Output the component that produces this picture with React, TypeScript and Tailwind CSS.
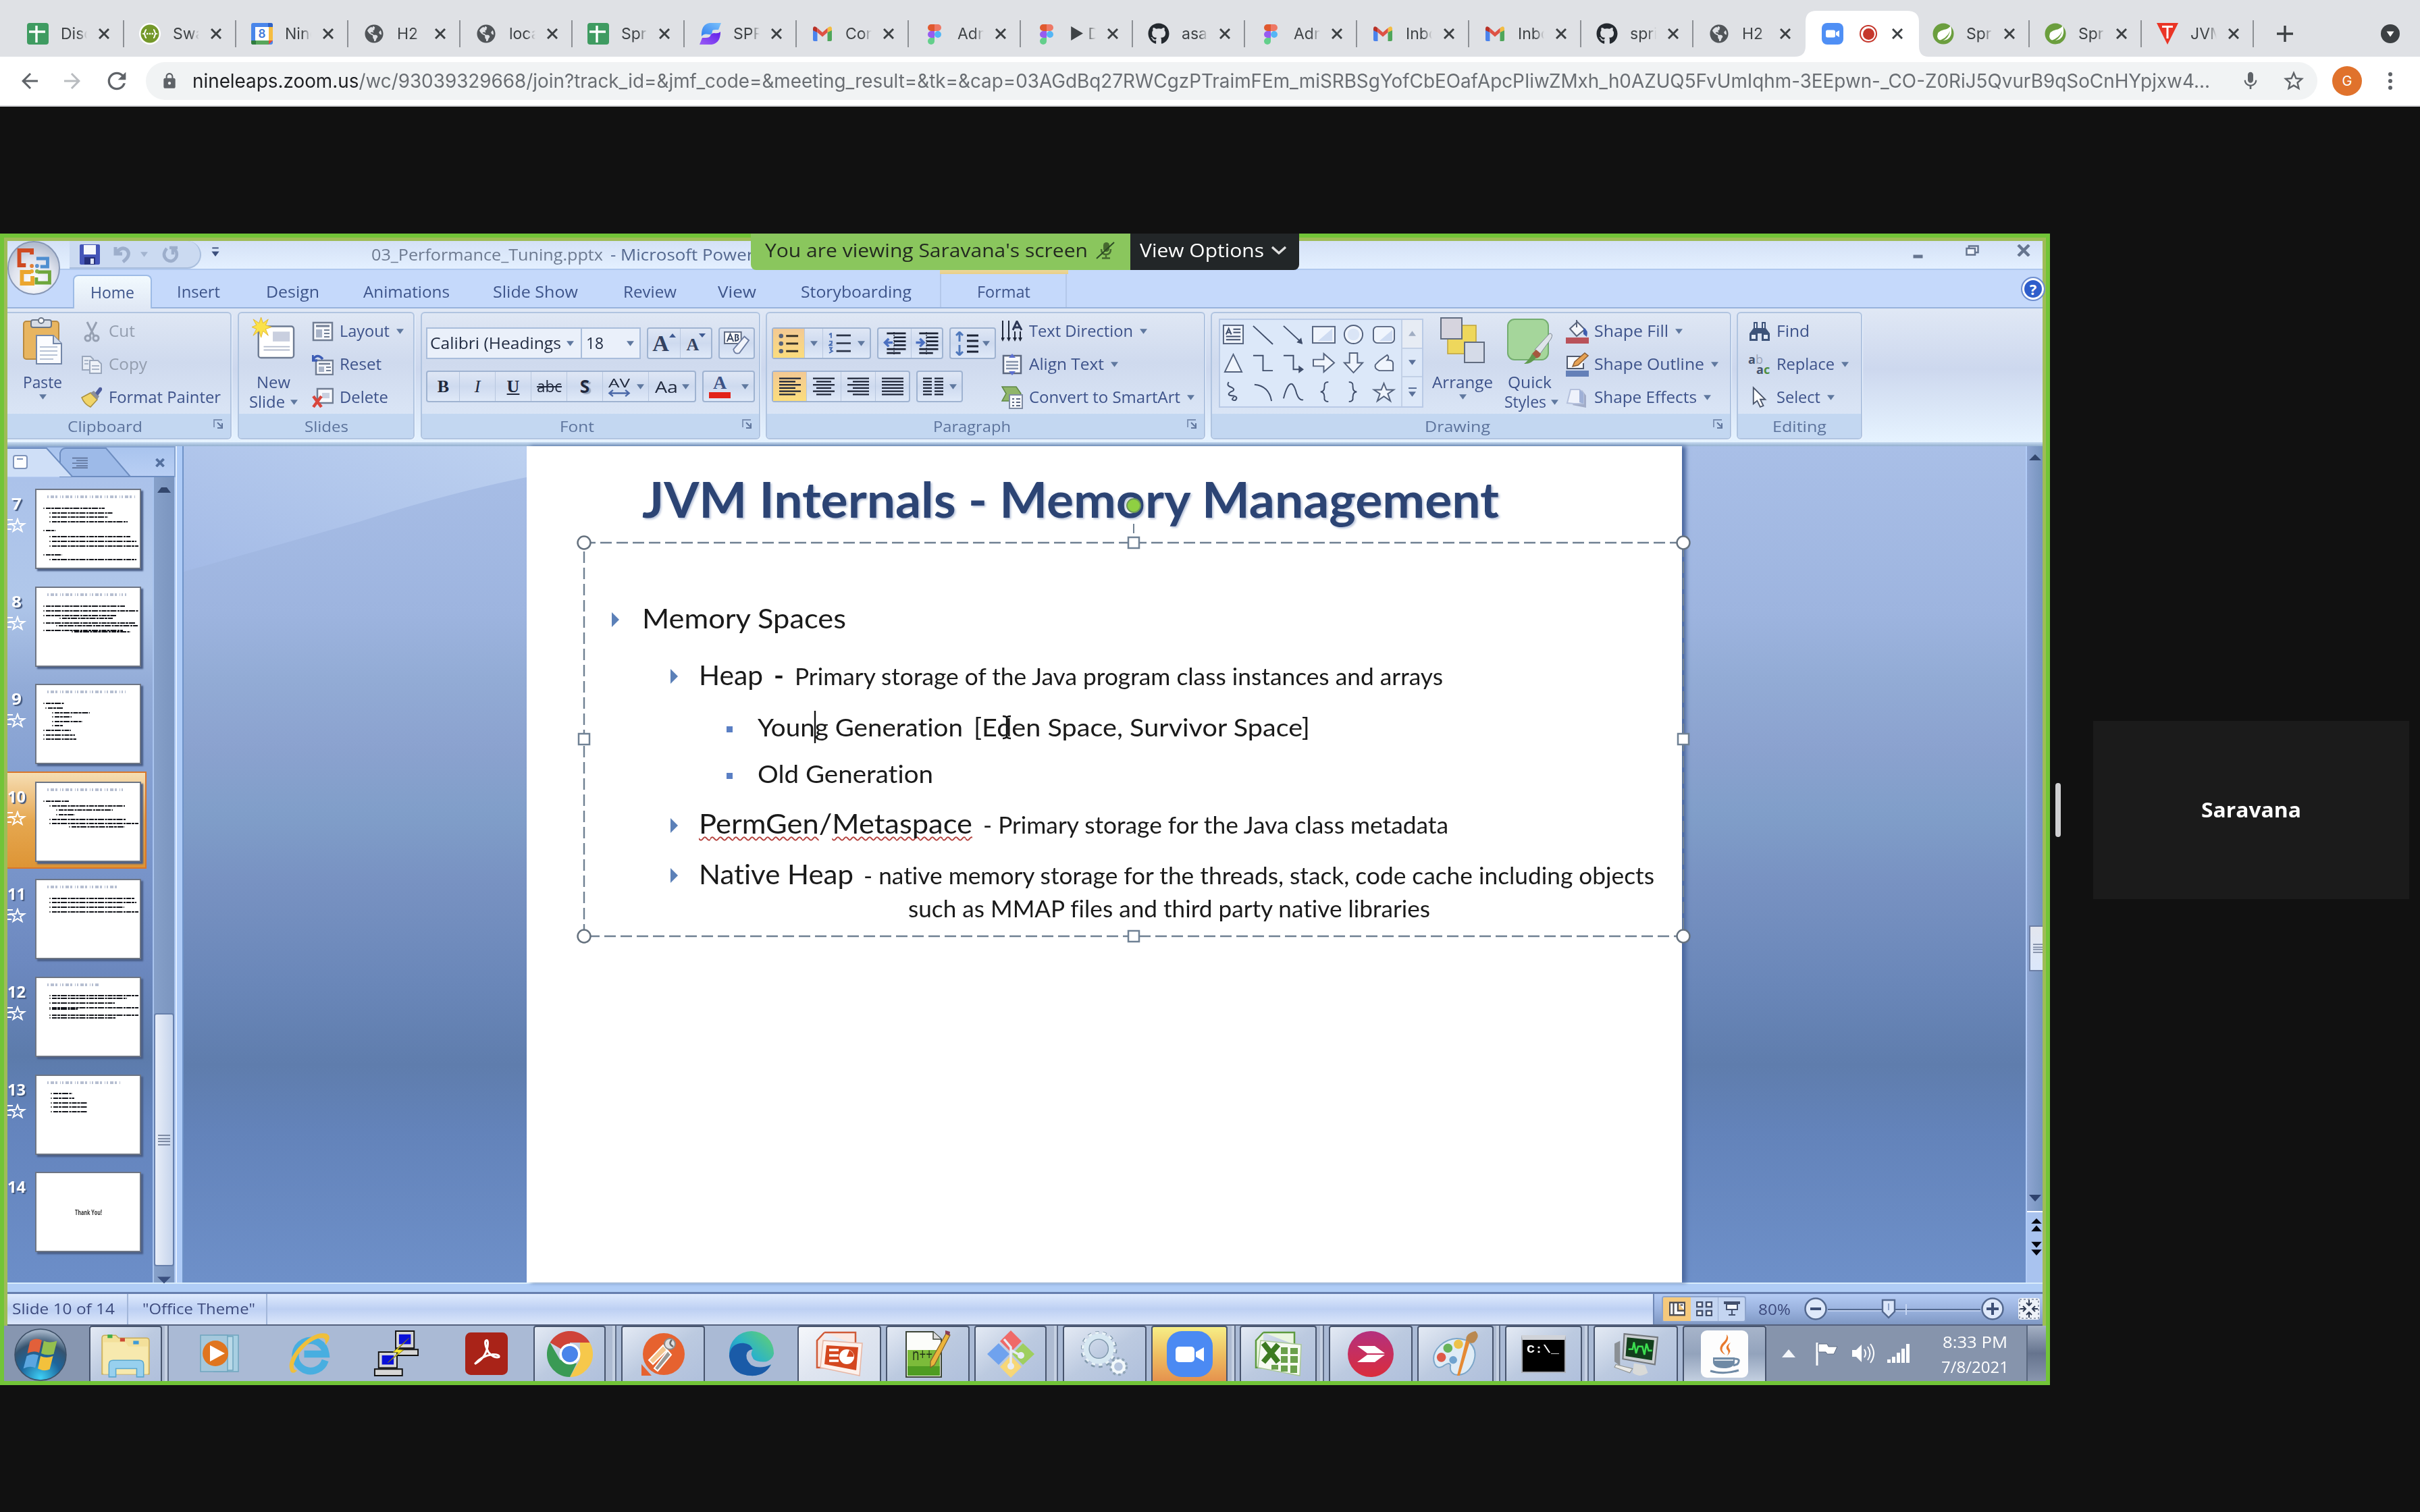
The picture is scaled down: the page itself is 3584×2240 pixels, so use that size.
import { useLayoutEffect, useRef, type ReactNode } from "react";
import { FaGithub, FaGlobeAmericas } from "react-icons/fa";
import { MdArrowBack, MdArrowForward, MdLock, MdMic, MdRefresh, MdStarBorder } from "react-icons/md";

/* Single line of text condensed or widened to fill the width of its box. */
function Fit({ className = "", inner = "", children }: { className?: string; inner?: string; children: ReactNode }) {
  const outerRef = useRef<HTMLSpanElement>(null);
  const innerRef = useRef<HTMLSpanElement>(null);
  useLayoutEffect(() => {
    const o = outerRef.current;
    const i = innerRef.current;
    if (!o || !i) return;
    i.style.transform = "none";
    const ow = o.getBoundingClientRect().width;
    const iw = i.getBoundingClientRect().width;
    if (iw > 0) i.style.transform = `scaleX(${ow / iw})`;
  }, []);
  return (
    <span ref={outerRef} className={`block shrink-0 whitespace-nowrap leading-none ${className}`}>
      <span ref={innerRef} className={`inline-block origin-left whitespace-pre ${inner}`}>{children}</span>
    </span>
  );
}

function Tri({ className = "", color = "#5f789f" }: { className?: string; color?: string }) {
  return (
    <svg viewBox="0 0 12 8" className={`h-[8px] w-[11px] shrink-0 ${className}`}>
      <path d="M0 0H12L6 8Z" fill={color} />
    </svg>
  );
}

/* ---------- Browser ---------- */

const SheetsIcon = () => (
  <svg viewBox="0 0 32 32" className="size-8">
    <rect width="32" height="32" rx="4" fill="#3f9b61" />
    <path d="M3 13H27M14 4V29" stroke="#fff" strokeWidth="3.4" fill="none" />
  </svg>
);
const SwaggerIcon = () => (
  <svg viewBox="0 0 32 32" className="size-8">
    <circle cx="16" cy="16" r="16" fill="#fff" />
    <circle cx="16" cy="16" r="13.5" fill="#74982a" />
    <path d="M11 10c-3 0-1 5-4 6 3 1 1 6 4 6M21 10c3 0 1 5 4 6-3 1-1 6-4 6" stroke="#fff" strokeWidth="2" fill="none" />
    <path d="M11 16H21" stroke="#fff" strokeWidth="2.4" strokeDasharray="2.4 1.4" />
  </svg>
);
const CalendarIcon = () => (
  <div className="relative size-8">
    <svg viewBox="0 0 32 32" className="size-8">
      <rect width="32" height="32" rx="3" fill="#4a86ea" />
      <path d="M25 6H32V26H25Z" fill="#f6bd41" />
      <path d="M0 26H26V32H3Q0 32 0 29Z" fill="#57a55a" />
      <path d="M0 26H7V32H3Q0 32 0 29Z" fill="#2f7c3f" />
      <path d="M26 26H32L26 32Z" fill="#e24b3c" />
      <path d="M25 0H29Q32 0 32 3V6H25Z" fill="#2f62c6" />
      <rect x="6" y="6" width="20" height="20" fill="#fff" />
    </svg>
    <span className="absolute inset-0 flex items-center justify-center text-[17px] leading-none font-semibold text-[#3d77d8]">8</span>
  </div>
);
const GlobeIcon = () => (
  <div className="flex size-8 items-center justify-center">
    <FaGlobeAmericas className="size-[28px] text-[#515559]" />
  </div>
);
const SIcon = () => (
  <svg viewBox="0 0 32 32" className="size-8">
    <defs>
      <linearGradient id="sTop" x1="0" y1="1" x2="1" y2="0"><stop stopColor="#2f7df0" /><stop offset="1" stopColor="#7cc3fb" /></linearGradient>
      <linearGradient id="sBot" x1="0" y1="1" x2="1" y2="0"><stop stopColor="#9b5cf6" /><stop offset="1" stopColor="#5f1fe8" /></linearGradient>
    </defs>
    <path d="M32 0H15Q2 2 3 20Q6 15 14 17Q19 18 19 12Q19 10 24 10H28Z" fill="url(#sTop)" />
    <path d="M0 32H18Q31 30 31 13Q28 16 22 15Q17 15 16 19Q15 22 9 22H4Z" fill="url(#sBot)" />
  </svg>
);
const GmailIcon = () => (
  <svg viewBox="0 0 32 32" className="size-8">
    <path d="M2 9V25Q2 27 4 27H8.500V14Z" fill="#4b83ec" />
    <path d="M30 9V25Q30 27 28 27H23.500V14Z" fill="#4fa65b" />
    <path d="M23.500 7.500V14L30 11V8Q29.500 4 25.500 6Z" fill="#f2bd42" />
    <path d="M8.500 7.500V14L2 11V8Q2.500 4 6.500 6Z" fill="#b83127" />
    <path d="M8.500 7.500L16 14L23.500 7.500V14L16 20.500L8.500 14Z" fill="#de5245" />
  </svg>
);
const FigmaIcon = () => (
  <svg viewBox="0 0 32 32" className="size-8">
    <path d="M16 2H11a5 5 0 0 0 0 10H16Z" fill="#e0592f" />
    <path d="M16 2H21a5 5 0 0 1 0 10H16Z" fill="#ee7865" />
    <path d="M16 12H11a5 5 0 0 0 0 10H16Z" fill="#975cf0" />
    <circle cx="21" cy="17" r="5" fill="#54b6f6" />
    <path d="M16 22H11a5 5 0 1 0 5 5Z" fill="#63cf8b" />
  </svg>
);
const ZoomIcon = () => (
  <svg viewBox="0 0 32 32" className="size-8">
    <rect width="32" height="32" rx="8" fill="#4f8ff5" />
    <rect x="6" y="10.500" width="14" height="11" rx="2.500" fill="#fff" />
    <path d="M21 14L26 11V21L21 18Z" fill="#fff" />
  </svg>
);
const SpringIcon = () => (
  <svg viewBox="0 0 32 32" className="size-8">
    <circle cx="16" cy="16" r="15.500" fill="#6b9e3e" />
    <path d="M27 4Q24 9 17 10Q7 12 7 20Q8 26 14 26Q26 26 28 15Q28.500 9 27 4Z" fill="#fff" />
    <path d="M6 27Q21 24 26 12Q23 26 8 28.500Z" fill="#6b9e3e" />
  </svg>
);
const TIcon = () => (
  <svg viewBox="0 0 32 32" className="size-8">
    <path d="M0 0H32L16 32Z" fill="#ea3526" />
    <path d="M8 5.500H24M16 5.500V23" stroke="#fff" strokeWidth="3" />
  </svg>
);
const GitIcon = () => <FaGithub className="size-8 text-[#24292f]" />;

const TABS: { icon: ReactNode; title: string; active?: boolean; noLine?: boolean }[] = [
  { icon: <SheetsIcon />, title: "Disc" },
  { icon: <SwaggerIcon />, title: "Swa" },
  { icon: <CalendarIcon />, title: "Nine" },
  { icon: <GlobeIcon />, title: "H2" },
  { icon: <GlobeIcon />, title: "loca" },
  { icon: <SheetsIcon />, title: "Spri" },
  { icon: <SIcon />, title: "SPR" },
  { icon: <GmailIcon />, title: "Con" },
  { icon: <FigmaIcon />, title: "Adm" },
  { icon: <FigmaIcon />, title: "▶ D" },
  { icon: <GitIcon />, title: "asa" },
  { icon: <FigmaIcon />, title: "Adm" },
  { icon: <GmailIcon />, title: "Inbo" },
  { icon: <GmailIcon />, title: "Inbo" },
  { icon: <GitIcon />, title: "sprin" },
  { icon: <GlobeIcon />, title: "H2", noLine: true },
  { icon: <ZoomIcon />, title: "", active: true, noLine: true },
  { icon: <SpringIcon />, title: "Spri" },
  { icon: <SpringIcon />, title: "Spri" },
  { icon: <TIcon />, title: "JVM" },
];

const CloseX = () => (
  <svg viewBox="0 0 16 16" className="size-4 shrink-0">
    <path d="M1 1L15 15M15 1L1 15" stroke="#3c4043" strokeWidth="3" />
  </svg>
);

function Browser() {
  return (
    <header className="h-[158px] shrink-0 border-b-2 border-[#d5d6d9] bg-white font-[Inter,sans-serif]">
      <div className="flex h-[84px] items-stretch bg-[#dfe1e5] pt-4 pl-[18px]">
        {TABS.map((t, i) => (
          <div key={i} className="relative flex h-[68px] w-[166px] shrink-0 items-center">
            {t.active && (
              <svg viewBox="0 0 198 68" className="absolute -left-4 h-[68px] w-[198px]">
                <path d="M0 68Q16 68 16 52V16Q16 0 32 0H166Q184 0 184 16V52Q184 68 198 68Z" fill="#fff" />
              </svg>
            )}
            <div className={`relative shrink-0 ${t.active ? "ml-6" : "ml-[22px]"}`}>{t.icon}</div>
            {t.active ? (
              <div className="relative ml-[24px] flex size-[26px] items-center justify-center rounded-full border-[2.500px] border-[#c5372c]">
                <div className="size-[17px] rounded-full bg-[#c5372c]" />
              </div>
            ) : (
              <div className="ml-[18px] w-[39px] overflow-hidden text-[23px] leading-[30px] whitespace-nowrap text-[#3f4346] [mask-image:linear-gradient(to_right,black_65%,transparent)]">{t.title}</div>
            )}
            <div className={`relative ${t.active ? "ml-[22px]" : "ml-[17px]"}`}><CloseX /></div>
            {!t.noLine && <div className="ml-auto h-10 w-[2px] bg-[#8d9095]" />}
          </div>
        ))}
        <svg viewBox="0 0 24 24" className="mt-[22px] ml-[34px] size-6"><path d="M12 0V24M0 12H24" stroke="#3c4043" strokeWidth="3.400" /></svg>
        <svg viewBox="0 0 28 28" className="mt-5 mr-[30px] ml-auto size-7"><circle cx="14" cy="14" r="14" fill="#3c4043" /><path d="M8.500 10.500H19.500L14 18.500Z" fill="#fff" /></svg>
      </div>
      <div className="flex h-[72px] items-center pl-[27px] text-[#5f6368]">
        <MdArrowBack className="-ml-px size-9" />
        <MdArrowForward className="ml-[27px] size-9 text-[#b9bcc0]" />
        <MdRefresh className="ml-[28px] size-10" />
        <div className="ml-[23px] flex h-14 w-[3216px] shrink-0 items-center rounded-full bg-[#f1f3f4] pl-[22px]">
          <MdLock className="size-[26px]" />
          <Fit className="ml-[21px] w-[2988px] text-[28px]" inner="text-[#6a6e73]">
            <span className="text-[#202124]">nineleaps.zoom.us</span>/wc/93039329668/join?track_id=&amp;jmf_code=&amp;meeting_result=&amp;tk=&amp;cap=03AGdBq27RWCgzPTraimFEm_miSRBSgYofCbEOafApcPIiwZMxh_h0AZUQ5FvUmIqhm-3EEpwn-_CO-Z0RiJ5QvurB9qSoCnHYpjxw4...
          </Fit>
          <MdMic className="ml-[44px] size-[32px]" />
          <MdStarBorder className="ml-[30px] size-[36px]" />
        </div>
        <div className="ml-[22px] flex size-11 items-center justify-center rounded-full bg-[#e0722c] text-[20px] text-white">G</div>
        <svg viewBox="0 0 8 28" className="ml-[38px] h-[28px] w-2"><circle cx="4" cy="4" r="3" fill="#5f6368" /><circle cx="4" cy="14" r="3" fill="#5f6368" /><circle cx="4" cy="24" r="3" fill="#5f6368" /></svg>
      </div>
    </header>
  );
}

/* ---------- Ribbon ---------- */

function TitleBar() {
  return (
    <div className="relative flex h-[43px] items-center border-b-2 border-[#b0c8ee] bg-linear-to-b from-[#d4e1f6] to-[#e4f0ff]">
      <div className="ml-[92px] flex h-[41px] w-[195px] items-center rounded-r-[22px] border-r-2 border-b-2 border-[#a9bedd] bg-[#cbdaf1] pl-[15px]">
        <svg viewBox="0 0 30 30" className="size-[30px]">
          <rect width="30" height="30" rx="2" fill="#4455b8" />
          <rect x="6" y="1" width="18" height="14" fill="#f4f7fd" />
          <rect x="7" y="19" width="16" height="11" fill="#25307c" /><rect x="16" y="21" width="5" height="8" fill="#dfe6f6" />
        </svg>
        <svg viewBox="0 0 28 28" className="ml-5 h-7 w-7"><path d="M3 3V13H13M4 12Q12 1 20 7Q27 15 14 25" fill="none" stroke="#9daecb" strokeWidth="5" /></svg>
        <Tri className="ml-3" color="#a3b4cf" />
        <svg viewBox="0 0 28 28" className="ml-5 h-7 w-7"><path d="M8 5Q0 15 8 22Q17 27 22 18Q25 9 17 5V14M12 4H24" fill="none" stroke="#9daecb" strokeWidth="4.500" /></svg>
      </div>
      <svg viewBox="0 0 12 16" className="-mt-2 ml-[15px] h-[15px] w-3"><path d="M1 1.500H11" stroke="#3b4f7d" strokeWidth="2" /><path d="M0 7H12L6 15Z" fill="#3b4f7d" /></svg>
      <Fit className="ml-[225px] w-[343px] text-[23px] text-[#6d7a90]">03_Performance_Tuning.pptx</Fit>
      <Fit className="ml-[11px] w-[275px] text-[23px] text-[#54688f]">- Microsoft PowerPoint</Fit>
      <svg viewBox="0 0 14 6" className="mt-1 ml-auto h-[6px] w-[15px]"><path d="M0 3H14" stroke="#66758f" strokeWidth="5" /></svg>
      <svg viewBox="0 0 20 16" className="-mt-[14px] ml-[63px] h-[16px] w-[20px]"><path d="M5 4V1.500H18.500V11H15M1.500 5H14V14.500H1.500Z" fill="#f0f5ff" stroke="#66758f" strokeWidth="2.500" /></svg>
      <svg viewBox="0 0 20 18" className="-mt-[14px] mr-[18px] ml-[56px] h-[18px] w-[20px]"><path d="M2 1L18 17M18 1L2 17" stroke="#66758f" strokeWidth="4.500" /></svg>
    </div>
  );
}

function RTab({ box, text, children }: { box: string; text: string; children: string }) {
  return (
    <div className={`flex h-full shrink-0 items-center justify-center pt-[10px] ${box}`}>
      <Fit className={text}>{children}</Fit>
    </div>
  );
}

function TabRow() {
  return (
    <div className="flex h-[57px] items-stretch border-b-2 border-[#98b3dc] bg-[#c5d9fb] pl-[97px] text-[23px] text-[#3d548a]">
      <div className="mt-[7px] -mb-[2px] flex w-[117px] shrink-0 items-center justify-center rounded-t-lg border-2 border-b-0 border-[#9dbbe6] bg-linear-to-b from-[#f2fafe] to-[#e0e8f5] pt-px">
        <Fit className="w-[65px]">Home</Fit>
      </div>
      <RTab box="w-[137px]" text="w-[64px]">Insert</RTab>
      <RTab box="w-[142px]" text="w-[79px]">Design</RTab>
      <RTab box="w-[196px]" text="w-[128px]">Animations</RTab>
      <RTab box="w-[186px]" text="w-[126px]">Slide Show</RTab>
      <RTab box="w-[152px]" text="w-[79px]">Review</RTab>
      <RTab box="w-[106px]" text="w-[57px]">View</RTab>
      <RTab box="w-[248px]" text="w-[164px]">Storyboarding</RTab>
      <RTab box="w-[188px] border-x-2 border-[#b4c8ea]" text="w-[79px]">Format</RTab>
      <div className="mt-3 mr-[-2px] ml-auto flex size-[32px] items-center justify-center rounded-full border-[3px] border-white bg-[#2f5ecb] text-[22px] leading-none font-bold text-white outline-2 outline-[#6f8fd0]">?</div>
    </div>
  );
}

function Launcher() {
  return (
    <svg viewBox="0 0 15 14" className="absolute top-[8px] right-[10px] h-[14px] w-[15px]">
      <path d="M1 12V1H13" fill="none" stroke="#7b8fb1" strokeWidth="1.800" />
      <path d="M6 5L12 11M13 6V13H6" fill="none" stroke="#5f759c" strokeWidth="2" />
    </svg>
  );
}

function Group({ width, label, labelW, launcher = true, children }: { width: string; label: string; labelW: string; launcher?: boolean; children: ReactNode }) {
  return (
    <section className={`flex h-[189px] shrink-0 flex-col overflow-hidden rounded-md border-2 border-[#b0c4e0] bg-linear-to-b from-[#dfe7f4] via-[#cfdaee] via-40% to-[#dfeaf9] shadow-[1px_1px_0_#eef5ff] ${width}`}>
      <div className="flex h-[149px] items-stretch">{children}</div>
      <div className={`relative flex h-[36px] items-center justify-center bg-[#c3d7f1] text-[22px] text-[#5c739c] ${launcher ? "pr-[41px]" : ""}`}>
        <Fit className={labelW}>{label}</Fit>
        {launcher && <Launcher />}
      </div>
    </section>
  );
}

function Cmd({ icon, text, children, arrow, dim }: { icon: ReactNode; text: string; children: string; arrow?: boolean; dim?: boolean }) {
  return (
    <div className="flex h-[49px] items-center text-[23px]">
      <div className="flex w-[34px] shrink-0 items-center justify-center">{icon}</div>
      <Fit className={`ml-[8px] ${text} ${dim ? "text-[#939dae]" : "text-[#3d528a]"}`}>{children}</Fit>
      {arrow && <Tri className="ml-[10px]" />}
    </div>
  );
}

function BigBtn({ icon, lines, className }: { icon: ReactNode; lines: ReactNode; className: string }) {
  return (
    <div className={`flex shrink-0 flex-col items-center text-[23px] text-[#3d528a] ${className}`}>
      <div className="mt-[6px] flex h-[74px] items-start">{icon}</div>
      <div className="mt-[11px] flex flex-col items-center gap-[6px]">{lines}</div>
    </div>
  );
}

const I = "size-8";
const PasteIcon = () => (
  <svg viewBox="0 0 60 70" className="h-[70px] w-[60px]">
    <rect x="2" y="6" width="52" height="56" rx="4" fill="#e8b560" stroke="#b98a40" strokeWidth="2" />
    <rect x="13" y="4" width="30" height="11" rx="3" fill="#d8dde6" stroke="#6b7687" strokeWidth="2" />
    <circle cx="28" cy="5" r="4" fill="#fff" stroke="#6b7687" strokeWidth="2" />
    <path d="M21 27H46L58 39V69H21Z" fill="#fbfcff" stroke="#7487a8" strokeWidth="2" />
    <path d="M46 27V39H58" fill="#d5deec" stroke="#7487a8" strokeWidth="2" />
    <path d="M26 44H52M26 50H52M26 56H52M26 62H46" stroke="#b8c3d6" strokeWidth="2" />
  </svg>
);
const CutIcon = () => (
  <svg viewBox="0 0 32 32" className={I}><path d="M9 2L19 22M23 2L13 22" stroke="#96a0b2" strokeWidth="3" /><circle cx="10" cy="26" r="4" fill="none" stroke="#96a0b2" strokeWidth="3" /><circle cx="22" cy="26" r="4" fill="none" stroke="#96a0b2" strokeWidth="3" /></svg>
);
const CopyIcon = () => (
  <svg viewBox="0 0 32 32" className={I}><path d="M2 4H14L18 8V24H2Z" fill="#e6ecf5" stroke="#9aa7bc" strokeWidth="2" /><path d="M13 10H25L30 15V29H13Z" fill="#eef2f8" stroke="#9aa7bc" strokeWidth="2" /><path d="M5 10H11M5 15H11M16 18H27M16 23H27" stroke="#a9b5c8" strokeWidth="2" /></svg>
);
const BrushIcon = () => (
  <svg viewBox="0 0 32 32" className={I}><path d="M1 16L14 9L24 19L14 30Q5 26 1 16Z" fill="#f0d468" stroke="#a98f3e" strokeWidth="1.500" /><path d="M14 9L19 6L27 14L24 19Z" fill="#8d8f98" /><path d="M21 9L27 1Q32 0 31 5L25 13Z" fill="#4e5d9c" /></svg>
);
const NewSlideIcon = () => (
  <svg viewBox="0 0 66 64" className="h-[62px] w-[66px]">
    <rect x="10" y="14" width="54" height="48" rx="4" fill="#fff" stroke="#6d7b93" strokeWidth="2.500" />
    <rect x="32" y="22" width="26" height="15" fill="#c9cfdf" /><path d="M18 45H58M18 50H58" stroke="#b4bccd" strokeWidth="2" />
    <path d="M14 0L17 9L25 3L21 12L30 15L21 18L25 28L17 21L14 31L11 21L2 28L7 18L0 15L7 12L2 3L11 9Z" fill="#fbe24a" stroke="#e2b62e" strokeWidth="1" />
  </svg>
);
const LayoutIcon = () => (
  <svg viewBox="0 0 32 32" className={I}><rect x="2" y="3" width="28" height="26" fill="#f6f8fc" stroke="#707d93" strokeWidth="2.500" /><path d="M6 8H26" stroke="#707d93" strokeWidth="3" /><rect x="6" y="13" width="9" height="12" fill="#a9b4c8" /><path d="M18 14H26M18 19H26M18 24H26" stroke="#707d93" strokeWidth="2" /></svg>
);
const ResetIcon = () => (
  <svg viewBox="0 0 32 32" className={I}><rect x="6" y="10" width="25" height="21" fill="#f6f8fc" stroke="#707d93" strokeWidth="2.500" /><path d="M10 15H27" stroke="#707d93" strokeWidth="2.500" /><rect x="10" y="19" width="8" height="8" fill="#a9b4c8" /><path d="M21 20H28M21 25H28" stroke="#707d93" strokeWidth="2" /><path d="M1 2V10H8M2 8Q8 -1 16 8" stroke="#3c5cb5" strokeWidth="3.500" fill="none" /></svg>
);
const DeleteIcon = () => (
  <svg viewBox="0 0 32 32" className={I}><rect x="8" y="3" width="23" height="21" fill="#f6f8fc" stroke="#707d93" strokeWidth="2.500" /><rect x="15" y="9" width="11" height="8" fill="#c9d0df" /><path d="M2 14L14 30M14 14L2 30" stroke="#d8453c" strokeWidth="4.500" /></svg>
);

const boxBtn = "flex h-[47px] shrink-0 items-stretch rounded-[4px] border-2 border-[#9fb3d1] bg-linear-to-b from-[#dfe7f5] via-[#cedaef] to-[#dfe9f8]";
const cell = "flex shrink-0 items-center justify-center gap-2 border-r border-[#b8c7df] last:border-r-0";

function FontGroup() {
  return (
    <Group width="ml-[9px] w-[503px]" label="Font" labelW="w-[51px]">
      <div className="flex flex-col gap-[17px] pt-[21px] pl-[6px]">
        <div className="flex">
          <div className="flex h-[47px] w-[318px] border-2 border-[#a9bddb] bg-[#eaf0fa] text-[23px] text-[#222c42]">
            <div className="flex w-[229px] items-center border-r-2 border-[#a9bddb] pl-1"><Fit className="w-[194px]">Calibri (Headings</Fit><Tri className="ml-[8px]" /></div>
            <div className="flex items-center pl-[6px]"><Fit className="w-[26px]">18</Fit><Tri className="ml-[34px]" /></div>
          </div>
          <div className={`${boxBtn} ml-[9px] w-[97px] font-["Liberation_Serif",serif] font-bold text-[#33415f]`}>
            <div className={`${cell} w-[48px] gap-[0px] text-[34px]`}>A<svg viewBox="0 0 10 6" className="-mt-6 h-[6px] w-[10px]"><path d="M0 6L5 0L10 6Z" fill="#3f5a92" /></svg></div>
            <div className={`${cell} w-[46px] gap-[0px] pt-1 text-[26px]`}>A<svg viewBox="0 0 10 6" className="-mt-7 h-[6px] w-[10px]"><path d="M0 0L5 6L10 0Z" fill="#3f5a92" /></svg></div>
          </div>
          <div className={`${boxBtn} ml-[9px] w-[54px] justify-center`}>
            <svg viewBox="0 0 44 40" className="mt-[2px] h-[38px] w-[42px]"><rect x="3" y="3" width="26" height="18" fill="#fff" stroke="#5c6880" strokeWidth="2" /><path d="M7 18L12 6L17 18M9 14H15M20 7Q27 7 23 11Q28 15 20 17Z" fill="none" stroke="#394763" strokeWidth="2" /><path d="M34 10L41 16L26 36Q18 38 17 30Z" fill="#f1f4fb" stroke="#6b7ba0" strokeWidth="2" /></svg>
          </div>
        </div>
        <div className="flex">
          <div className={`${boxBtn} w-[400px] text-[26px] text-[#20283c]`}>
            <div className={`${cell} w-[48px] font-["Liberation_Serif",serif] font-bold`}>B</div>
            <div className={`${cell} w-[53px] font-["Liberation_Serif",serif] italic`}>I</div>
            <div className={`${cell} w-[53px] font-["Liberation_Serif",serif] font-bold underline`}>U</div>
            <div className={`${cell} w-[53px]`}><Fit className="w-[37px] text-[23px]" inner="line-through">abc</Fit></div>
            <div className={`${cell} w-[53px] font-bold [text-shadow:3px_2px_1px_#98a5bb]`}>S</div>
            <div className={`${cell} w-[68px]`}>
              <div className="flex flex-col items-center"><Fit className="w-[32px] text-[19px]">AV</Fit><svg viewBox="0 0 36 12" className="h-[11px] w-[36px]"><path d="M2 6H34M8 1L2 6L8 11M28 1L34 6L28 11" stroke="#4a68a8" strokeWidth="2.500" fill="none" /></svg></div>
              <Tri />
            </div>
            <div className={`${cell} grow gap-[6px]`}><Fit className="w-[34px] text-[24px]">Aa</Fit><Tri /></div>
          </div>
          <div className={`${boxBtn} ml-[9px] w-[78px] pl-2`}>
            <div className="flex w-[32px] flex-col items-center self-center"><span className="h-[24px] font-['Liberation_Serif',serif] text-[28px] leading-[24px] font-bold text-[#3c5285]">A</span><span className="mt-[2px] h-[9px] w-[32px] bg-[#e2231a]" /></div>
            <Tri className="ml-4 self-center" />
          </div>
        </div>
      </div>
    </Group>
  );
}

const lines = (ws: [number, number][], y0 = 2, dy = 6) => ws.map(([a, b], i) => <path key={i} d={`M${a} ${y0 + i * dy}H${b}`} stroke="#1d2436" strokeWidth="2.800" />);
function AlignIcon({ kind }: { kind: "l" | "c" | "r" | "j" }) {
  const m: Record<string, [number, number][]> = {
    l: [[0, 32], [0, 24], [0, 32], [0, 24], [0, 32], [0, 24]],
    c: [[0, 32], [5, 27], [0, 32], [5, 27], [0, 32], [5, 27]],
    r: [[0, 32], [8, 32], [0, 32], [8, 32], [0, 32], [8, 32]],
    j: [[0, 32], [0, 32], [0, 32], [0, 32], [0, 32], [0, 32]],
  };
  return <svg viewBox="0 0 32 34" className="h-[27px] w-[32px]" preserveAspectRatio="none">{lines(m[kind])}</svg>;
}
function IndentIcon({ right }: { right?: boolean }) {
  return (
    <svg viewBox="0 0 34 34" className="h-[33px] w-[34px]">
      {lines([[5, 34], [16, 34], [16, 34], [16, 34], [5, 34], [5, 26]], 2, 6)}
      <path d={right ? "M0 16H10M6 10L12 16L6 22" : "M14 16H3M8 10L2 16L8 22"} stroke="#4a6fc0" strokeWidth="3.500" fill="none" />
      <path d="M16 0V34" stroke="#1d2436" strokeWidth="1.500" strokeDasharray="2 2" />
    </svg>
  );
}

function ParagraphGroup() {
  return (
    <Group width="ml-[8px] w-[651px]" label="Paragraph" labelW="w-[115px]">
      <div className="flex w-[340px] shrink-0 flex-col gap-[17px] pt-[21px] pl-[7px]">
        <div className="flex">
          <div className={`${boxBtn} w-[147px]`}>
            <div className={`${cell} w-[47px] bg-linear-to-b from-[#f3c993] to-[#fbdd7c]`}>
              <svg viewBox="0 0 32 32" className="h-[30px] w-[32px]"><circle cx="4" cy="4" r="3.500" fill="#56627a" /><circle cx="4" cy="16" r="3.500" fill="#56627a" /><circle cx="4" cy="28" r="3.500" fill="#56627a" /><path d="M12 4H31M12 16H31M12 28H31" stroke="#3a3428" strokeWidth="3" /></svg>
            </div>
            <div className={`${cell} w-[27px]`}><Tri /></div>
            <div className={`${cell} grow gap-[10px]`}>
              <svg viewBox="0 0 34 32" className="h-[31px] w-[33px]"><path d="M1 3L4 1V8M1 13H5V16L1 19H6M1 23H5L3 26L6 28L1 31" stroke="#4a6fb5" strokeWidth="2" fill="none" /><path d="M12 4H34M12 16H34M12 28H34" stroke="#2b3448" strokeWidth="2.800" /></svg>
              <Tri />
            </div>
          </div>
          <div className={`${boxBtn} ml-[9px] w-[98px]`}>
            <div className={`${cell} w-[49px]`}><IndentIcon /></div>
            <div className={`${cell} grow`}><IndentIcon right /></div>
          </div>
          <div className={`${boxBtn} ml-[9px] w-[69px]`}>
            <div className={`${cell} grow gap-[4px]`}>
              <svg viewBox="0 0 36 36" className="h-[36px] w-[36px]"><path d="M6 1V15M1 6L6 1L11 6M6 20V35M1 30L6 35L11 30" stroke="#4f78bc" strokeWidth="3" fill="none" /><path d="M17 6H34M17 14H34M17 22H34M17 30H34" stroke="#1d2436" strokeWidth="2.800" /></svg>
              <Tri />
            </div>
          </div>
        </div>
        <div className="flex">
          <div className={`${boxBtn} w-[205px]`}>
            <div className={`${cell} w-[50px] bg-linear-to-b from-[#f3c993] to-[#fbdd7c]`}><AlignIcon kind="l" /></div>
            <div className={`${cell} w-[51px]`}><AlignIcon kind="c" /></div>
            <div className={`${cell} w-[51px]`}><AlignIcon kind="r" /></div>
            <div className={`${cell} grow`}><AlignIcon kind="j" /></div>
          </div>
          <div className={`${boxBtn} ml-[9px] w-[69px]`}>
            <div className={`${cell} grow gap-[9px]`}>
              <svg viewBox="0 0 30 34" className="h-[27px] w-[30px]" preserveAspectRatio="none"><path d="M0 2H13M0 8H13M0 14H13M0 20H13M0 26H13M0 32H13M17 2H30M17 8H30M17 14H30M17 20H30M17 26H30M17 32H30" stroke="#1d2436" strokeWidth="2.800" /></svg>
              <Tri />
            </div>
          </div>
        </div>
      </div>
      <div className="flex flex-col pt-[2px] pl-[6px]">
        <Cmd arrow text="w-[154px]" icon={<svg viewBox="0 0 32 32" className={I}><path d="M2 0V28M11 0V28M20 16V28M28 16V28" stroke="#1f2739" strokeWidth="2" /><path d="M-1 25H5L2 31ZM8 25H14L11 31ZM17 25H23L20 31ZM25 25H31L28 31Z" fill="#1f2739" /><path d="M17 14L23 1L30 14M19 10H28" stroke="#2d3856" strokeWidth="3" fill="none" /></svg>}>Text Direction</Cmd>
        <Cmd arrow text="w-[111px]" icon={<svg viewBox="0 0 32 32" className={I}><path d="M3 3H29V29H3Z" fill="#f7f9fd" stroke="#5c6880" strokeWidth="2.500" /><path d="M7 12H25M7 17H25M7 22H25" stroke="#8592aa" strokeWidth="2.500" /><path d="M11 6L16 0L21 6ZM11 26L16 32L21 26Z" fill="#5b6fd0" /></svg>}>Align Text</Cmd>
        <Cmd arrow text="w-[224px]" icon={<svg viewBox="0 0 32 34" className="h-[34px] w-8"><path d="M1 1H22L29 11L22 22H1L7 11Z" fill="#8fb56a" stroke="#5f8845" strokeWidth="1.500" /><path d="M12 13H31V33H12Z" fill="#f6f8fc" stroke="#7e8ba3" strokeWidth="2" /><path d="M16 19H19M22 19H28M16 24H19M22 24H28M16 29H19M22 29H28" stroke="#5a6680" strokeWidth="2" /></svg>}>Convert to SmartArt</Cmd>
      </div>
    </Group>
  );
}

const S = { fill: "#f0f5fd", stroke: "#54627d", strokeWidth: 2 } as const;
const N = { fill: "none", stroke: "#3f4d6a", strokeWidth: 2 } as const;
const SHAPES: ReactNode[] = [
  <><rect x="2" y="3" width="30" height="28" {...S} /><path d="M6 17L10 8L14 17M7 14H13" {...N} /><path d="M17 9H28M17 14H28M6 20H28M6 25H28" {...N} /></>,
  <path d="M2 4L32 32" {...N} />,
  <><path d="M2 4L30 30" {...N} /><path d="M31 32L22 29L29 22Z" fill="#3f4d6a" /></>,
  <><rect x="0" y="5" width="34" height="25" {...S} /><path d="M30 8V27H8Z" fill="#cfdcf2" /></>,
  <><circle cx="17" cy="17" r="14" {...S} /><circle cx="17" cy="17" r="9" fill="#dae5f6" /></>,
  <><rect x="1" y="5" width="32" height="25" rx="6" {...S} /><path d="M30 10V27H10Z" fill="#cfdcf2" /></>,
  <path d="M17 4L30 31H4Z" {...S} />,
  <path d="M2 6H17V29H32" {...N} />,
  <><path d="M2 6H17V27H28" {...N} /><path d="M33 27L25 21V33Z" fill="#3f4d6a" /></>,
  <path d="M1 12H17V3L33 17L17 31V22H1Z" {...S} />,
  <path d="M11 2H23V17H31L17 32L3 17H11Z" {...S} />,
  <path d="M10 14L22 5Q26 8 22 13Q32 12 31 20V29H10Q2 26 4 20Z" {...S} />,
  <path d="M10 2Q6 8 14 10Q22 14 13 17Q6 22 15 23Q26 24 20 30Q12 30 18 25" {...N} />,
  <path d="M4 6Q26 8 30 31" {...N} />,
  <path d="M2 27Q8 3 15 5Q19 8 22 20Q26 31 32 29" {...N} />,
  <path d="M24 2Q17 2 18 9Q18 17 12 17Q18 17 18 25Q17 32 24 32" {...N} />,
  <path d="M10 2Q17 2 16 9Q16 17 22 17Q16 17 16 25Q17 32 10 32" {...N} />,
  <path d="M17 4L21 14H32L23 20L27 31L17 24L7 31L11 20L2 14H13Z" {...S} />,
];

function DrawingGroup() {
  return (
    <Group width="ml-[8px] w-[771px]" label="Drawing" labelW="w-[97px]">
      <div className="mt-[8px] ml-[10px] flex h-[132px] w-[303px] shrink-0 border-2 border-[#b9cae6] bg-[#dce8f9]">
        <div className="grid w-[268px] -translate-x-[3px] grid-cols-6 grid-rows-3 place-items-center">
          {SHAPES.map((s, i) => <svg key={i} viewBox="0 0 34 34" className="size-[33px] overflow-visible">{s}</svg>)}
        </div>
        <div className="grid grow grid-rows-3 border-l-2 border-[#c2d0e6]">
          <div className="flex items-center justify-center border-b-2 border-[#c2d0e6] bg-[#e7ecf4]"><Tri className="rotate-180" color="#a0adc2" /></div>
          <div className="flex items-center justify-center border-b-2 border-[#c2d0e6] bg-[#dde8f8]"><Tri color="#5a7099" /></div>
          <div className="flex flex-col items-center justify-center gap-1 bg-[#dde8f8]"><span className="h-[2px] w-3 bg-[#5a7099]" /><Tri color="#5a7099" /></div>
        </div>
      </div>
      <BigBtn
        className="ml-[12px] w-[92px]"
        icon={<svg viewBox="0 0 66 68" className="h-[68px] w-[66px]"><rect x="11" y="12" width="42" height="42" fill="#eed75c" stroke="#bfa23a" strokeWidth="1.500" /><rect x="1" y="1" width="31" height="31" fill="#d6d4de" stroke="#616c80" strokeWidth="2" /><rect x="36" y="37" width="29" height="30" fill="#d5dbe8" stroke="#616c80" strokeWidth="2" /></svg>}
        lines={<><Fit className="w-[90px]">Arrange</Fit><Tri /></>}
      />
      <BigBtn
        className="ml-[8px] w-[90px]"
        icon={<svg viewBox="0 0 68 70" className="h-[70px] w-[68px]"><rect x="2" y="3" width="60" height="60" rx="10" fill="#a5d69b" stroke="#74ad70" strokeWidth="2" /><path d="M64 24Q70 24 66 32L50 54L42 48Z" fill="#dfe4ea" stroke="#7d8794" strokeWidth="1" /><path d="M44 48L51 54Q50 60 43 61L38 54Z" fill="#a5593f" /><path d="M38 54L44 60Q36 70 26 69Q34 63 38 54Z" fill="#5f9a4e" /></svg>}
        lines={<><Fit className="w-[65px]">Quick</Fit><div className="-mr-[6px] flex items-center gap-[7px]"><Fit className="w-[62px]">Styles</Fit><Tri /></div></>}
      />
      <div className="flex flex-col pt-[2px] pl-[9px]">
        <Cmd arrow text="w-[110px]" icon={<svg viewBox="0 0 34 36" className="h-9 w-[34px]"><path d="M6 14L17 4L28 15L16 25Z" fill="#f4f6fb" stroke="#5a657c" strokeWidth="2" /><path d="M16 1V12" stroke="#5a657c" strokeWidth="2" /><path d="M26 12Q34 16 31 26L26 22Z" fill="#3d5cae" /><rect x="0" y="27" width="34" height="9" fill="#b9525a" /></svg>}>Shape Fill</Cmd>
        <Cmd arrow text="w-[163px]" icon={<svg viewBox="0 0 34 36" className="h-9 w-[34px]"><path d="M26 6H2V24H26V16" fill="#f7f9fd" stroke="#4f596e" strokeWidth="2" /><path d="M10 21L13 14L28 1L33 5L18 19Z" fill="#e6a254" stroke="#8b5c33" strokeWidth="1.500" /><rect x="0" y="27" width="34" height="9" fill="#6480b8" /></svg>}>Shape Outline</Cmd>
        <Cmd arrow text="w-[152px]" icon={<svg viewBox="0 0 34 34" className="size-[34px]"><path d="M10 28L30 32V14L24 6Z" fill="#8b95b5" opacity=".7" /><path d="M7 5H20L26 10V26H12L2 25Z" fill="#eef2fb" stroke="#b5c1dc" strokeWidth="2" /><path d="M20 5L26 10V26L20 24Z" fill="#9fb0d6" /></svg>}>Shape Effects</Cmd>
      </div>
    </Group>
  );
}

function Ribbon() {
  return (
    <div className="flex h-[198px] items-start bg-linear-to-b from-[#e0e8f5] via-[#cdd8ee] via-45% to-[#e6f3ff] pt-[5px]">
      <Group width="w-[332px] rounded-l-none border-l-0" label="Clipboard" labelW="w-[111px]">
        <BigBtn className="ml-[19px] w-[66px]" icon={<PasteIcon />} lines={<><Fit className="w-[58px]">Paste</Fit><Tri /></>} />
        <div className="flex flex-col pt-[2px] pl-[23px]">
          <Cmd dim text="w-[39px]" icon={<CutIcon />}>Cut</Cmd>
          <Cmd dim text="w-[57px]" icon={<CopyIcon />}>Copy</Cmd>
          <Cmd text="w-[166px]" icon={<BrushIcon />}>Format Painter</Cmd>
        </div>
      </Group>
      <Group width="ml-[9px] w-[262px]" label="Slides" labelW="w-[65px]" launcher={false}>
        <BigBtn className="ml-[15px] w-[72px]" icon={<NewSlideIcon />} lines={<><Fit className="w-[50px]">New</Fit><div className="flex items-center gap-[8px]"><Fit className="w-[53px]">Slide</Fit><Tri /></div></>} />
        <div className="flex flex-col pt-[2px] pl-[20px]">
          <Cmd arrow text="w-[74px]" icon={<LayoutIcon />}>Layout</Cmd>
          <Cmd text="w-[62px]" icon={<ResetIcon />}>Reset</Cmd>
          <Cmd text="w-[72px]" icon={<DeleteIcon />}>Delete</Cmd>
        </div>
      </Group>
      <FontGroup />
      <ParagraphGroup />
      <DrawingGroup />
      <Group width="ml-[8px] w-[186px]" label="Editing" labelW="w-[80px]" launcher={false}>
        <div className="flex flex-col pt-[2px] pl-[15px]">
          <Cmd text="w-[49px]" icon={<svg viewBox="0 0 34 34" className="size-[34px]"><path d="M8 3H14V12H20V3H26V12L32 20V31H20V20H14V31H2V20L8 12Z" fill="#3d5379" /><rect x="5" y="22" width="6" height="6" fill="#e5ecf8" /><rect x="23" y="22" width="6" height="6" fill="#e5ecf8" /><path d="M11 5V12M23 5V12" stroke="#dfe7f5" strokeWidth="2" /></svg>}>Find</Cmd>
          <Cmd arrow text="w-[86px]" icon={<div className="flex w-[34px] flex-col text-[18px] leading-[15px] font-bold text-[#46536e]"><span>a<span className="font-normal text-[#9aa5b9]">b</span></span><span className="pl-[12px]">a<span className="text-[#4d8f3f]">c</span></span></div>}>Replace</Cmd>
          <Cmd arrow text="w-[65px]" icon={<svg viewBox="0 0 26 34" className="h-[34px] w-[24px]"><path d="M3 1V27L9 22L14 32L19 30L14 20L22 20Z" fill="#fff" stroke="#4a556b" strokeWidth="2" /></svg>}>Select</Cmd>
        </div>
      </Group>
    </div>
  );
}

/* ---------- Slide panel ---------- */

type Line = [number, number, number];
const THUMBS: { n: number; title: number; lines: Line[] }[] = [
  { n: 7, title: 150, lines: [[29, 16, 103], [36, 25, 115], [42, 25, 108], [49, 25, 137], [62, 16, 30], [71, 25, 141], [78, 25, 150], [85, 25, 153], [98, 16, 40], [105, 25, 150]] },
  { n: 8, title: 135, lines: [[29, 16, 134], [36, 16, 153], [43, 16, 120], [47, 40, 115], [54, 16, 148], [58, 35, 153], [65, 16, 130], [67, 58, 141]] },
  { n: 9, title: 134, lines: [[29, 16, 43], [36, 19, 41], [43, 29, 81], [49, 29, 54], [56, 29, 70], [62, 29, 41], [69, 16, 53], [76, 16, 59], [82, 16, 61]] },
  { n: 10, title: 133, lines: [[29, 16, 50], [36, 25, 133], [42, 35, 115], [49, 35, 59], [56, 25, 134], [62, 25, 153], [67, 54, 133]] },
  { n: 11, title: 124, lines: [[29, 25, 148], [35, 25, 150], [42, 25, 132], [49, 25, 153]] },
  { n: 12, title: 96, lines: [[28, 25, 153], [32, 25, 136], [39, 25, 118], [46, 25, 153], [48, 25, 63], [57, 25, 153], [61, 25, 119]] },
  { n: 13, title: 126, lines: [[28, 27, 55], [35, 27, 58], [42, 27, 78], [48, 27, 77], [55, 27, 78]] },
  { n: 14, title: 0, lines: [] },
];

function SlidePanel() {
  return (
    <aside className="flex h-full w-[249px] shrink-0 flex-col">
      <div className="relative flex h-[46px] items-center border-t-2 border-r-2 border-[#86a3d0] bg-linear-to-b from-[#a9c4ee] to-[#b9cff4]">
        <svg viewBox="0 0 247 44" className="absolute inset-0 h-[44px] w-[247px]" preserveAspectRatio="none">
          <path d="M78 44V8Q80 1 86 1H146L182 43H96Z" fill="#9dbae8" stroke="#6d8dc0" strokeWidth="2" />
          <path d="M0 1H58L96 43H0Z" fill="#cfdff7" />
          <path d="M0 1H58L96 43H247" fill="none" stroke="#6d8dc0" strokeWidth="2" />
        </svg>
        <svg viewBox="0 0 22 22" className="relative ml-[8px] size-[22px]"><rect x="1" y="1" width="20" height="19" rx="3" fill="#fdfeff" stroke="#7e93ba" strokeWidth="2" /><path d="M6 6H15" stroke="#7e93ba" strokeWidth="2" /></svg>
        <svg viewBox="0 0 34 22" className="relative ml-[66px] h-[21px] w-[26px]"><path d="M0 2H30M8 7H30M0 12H30M8 17H30M0 21H30" stroke="#5f7399" strokeWidth="2.200" /></svg>
        <svg viewBox="0 0 16 14" className="relative mr-[13px] ml-auto h-[13px] w-[16px]"><path d="M2 1L14 13M14 1L2 13" stroke="#54709f" strokeWidth="4" /></svg>
      </div>
      <div className="flex grow">
        <div className="w-[215px] bg-[linear-gradient(to_bottom,#abc2ea_0%,#b0c7ea_15%,#92abd7_26%,#7f9bcf_42%,#6d89c0_60%,#5c7bab_72%,#6484bd_80%,#6c8ec8_100%)] pt-[2px]">
          {THUMBS.map((t) => (
            <div key={t.n} className={`flex h-[144.600px] w-[206px] ${t.n === 10 ? "bg-linear-to-b from-[#f6dfb5] via-[#e6a850] to-[#dd9434] shadow-[inset_-2px_-2px_0_#d9762a,inset_0_2px_0_#d9762a]" : ""}`}>
              <div className="flex w-[41px] shrink-0 flex-col pt-[26px]">
                <div className={`text-[23px] leading-[24px] font-bold text-white [text-shadow:2px_2px_1px_#44597f] ${t.n > 9 ? "w-[28px]" : "w-[28px] pl-[6px]"}`}>
                  <Fit className={t.n > 9 ? "w-[27px] text-[23px]" : "w-[15px] text-[23px]"}>{String(t.n)}</Fit>
                </div>
                {t.n !== 14 && (
                  <svg viewBox="0 0 28 22" className="mt-[9px] h-[22px] w-[28px]"><path d="M0 3H8M0 10H5M0 17H6" stroke="#fff" strokeWidth="2" /><path d="M15 2L17.500 9H25L19 13L21.500 20L15 16L8.500 20L11 13L5 9H12.500Z" fill="none" stroke="#fff" strokeWidth="2" /></svg>
                )}
              </div>
              <div className="relative mt-[15px] h-[119px] w-[157px] shrink-0 border-2 border-[#6d7584] bg-white shadow-[3px_3px_2px_#4a5f88]">
                {t.n === 14 ? (
                  <div className="flex h-full items-center justify-center"><Fit className="w-[40px] text-[11px] font-bold text-[#333]">Thank You!</Fit></div>
                ) : (
                  <svg viewBox="0 0 157 119" className="absolute -top-[2px] -left-[2px] h-[119px] w-[157px]">
                    <path d={`M18 12H${t.title}`} stroke="#7181a5" strokeWidth="4" strokeDasharray="2 3 5 2 3 4 1 2" opacity=".5" />
                    {t.lines.map(([y, a, b], i) => (
                      <g key={i}><path d={`M${a} ${y}H${b}`} stroke="#14161c" strokeWidth="2.200" strokeDasharray="7 1 4 1 9 1.500 3 1" /><circle cx={a - 3} cy={y} r="1" fill="#333" /></g>
                    ))}
                  </svg>
                )}
              </div>
            </div>
          ))}
        </div>
        <div className="flex w-[34px] flex-col items-center border-x-2 border-[#a9c4ee] bg-linear-to-r from-[#86a0c9] to-[#7b95bf]">
          <svg viewBox="0 0 20 8" className="mt-[15px] h-[8px] w-[20px] shrink-0"><path d="M6 0H14L20 8H0Z" fill="#33476d" /></svg>
          <div className="mt-auto flex h-[375px] w-[30px] shrink-0 items-center justify-center rounded-sm border-2 border-[#6780ac] bg-linear-to-r from-[#e9eef8] to-[#c5d4ec]">
            <svg viewBox="0 0 18 16" className="h-[16px] w-[18px]"><path d="M0 1H18M0 6H18M0 10H18M0 15H18" stroke="#7d8aa3" strokeWidth="2" /></svg>
          </div>
          <svg viewBox="0 0 20 10" className="mt-[15px] -mb-[2px] h-[11px] w-[20px] shrink-0"><path d="M0 0H20L10 10Z" fill="#3a5080" /></svg>
        </div>
      </div>
    </aside>
  );
}

/* ---------- Slide ---------- */

const Bullet = ({ className = "" }: { className?: string }) => (
  <svg viewBox="0 0 14 24" className={`h-[22px] w-[13px] shrink-0 self-start ${className}`}><path d="M1 0L13 12L1 24Z" fill="#5b80b8" /></svg>
);
const Square = () => <span className="mt-[18px] ml-[211px] size-[9px] shrink-0 self-start bg-[#5a7fc4]" />;

function Selection() {
  const round = [[0, 0], [1628, 0], [0, 583], [1628, 583]];
  const sq = [[814, 0], [814, 583], [0, 291], [1628, 291]];
  return (
    <svg viewBox="0 0 1628 583" className="absolute inset-0 h-[583px] w-[1628px] overflow-visible">
      <path d="M0 0H1628V583H0Z" fill="none" stroke="#6f8092" strokeWidth="2.400" strokeDasharray="17 7" />
      <path d="M814 -14V-28" stroke="#6f8092" strokeWidth="2" />
      <circle cx="814" cy="-55" r="10" fill="#8fd042" stroke="#6e9a58" strokeWidth="2" />
      {round.map(([x, y], i) => <circle key={i} cx={x} cy={y} r="9.500" fill="#fff" stroke="#66727f" strokeWidth="2.500" />)}
      {sq.map(([x, y], i) => <rect key={i} x={x - 8} y={y - 8} width="16" height="16" fill="#fff" stroke="#6f8194" strokeWidth="2.500" />)}
      <path d="M342 249V297" stroke="#111" strokeWidth="2.400" />
      <path d="M620 257Q626 257 626 260V286Q626 290 620 290M632 257Q626 257 626 260M626 286Q626 290 632 290" fill="none" stroke="#111" strokeWidth="2.400" />
    </svg>
  );
}

const wavy = "underline decoration-wavy decoration-[#b5433f] decoration-[1.500px] underline-offset-[4px] [text-decoration-skip-ink:none]";

function Slide() {
  return (
    <div className="flex h-full w-[1711px] shrink-0 flex-col overflow-visible bg-white font-[Lato,sans-serif] text-[#1a1a1a] shadow-[6px_0_6px_#4c69a0] [font-variant-ligatures:none]">
      <Fit className="mt-[42px] ml-[171px] w-[1269px] text-[73px] font-bold text-[#2c4474]" inner="[text-shadow:2px_2px_3px_#b9c4da]">JVM Internals - Memory Management</Fit>
      <div className="relative mt-[28px] ml-[85px] flex h-[583px] w-[1628px] flex-col pt-[91px]">
        <Selection />
        <div className="flex h-[84px] items-baseline text-[41px]">
          <Bullet className="mt-[12px] ml-[40px]" />
          <Fit className="ml-[33px] w-[302px]">Memory Spaces</Fit>
        </div>
        <div className="flex h-[79px] items-baseline text-[41px]">
          <Bullet className="mt-[12px] ml-[127px]" />
          <Fit className="ml-[30px] w-[95px]">Heap</Fit>
          <Fit className="ml-[16px] w-[15px] font-bold">-</Fit>
          <Fit className="ml-[16px] w-[960px] text-[34px]">Primary storage of the Java program class instances and arrays</Fit>
        </div>
        <div className="flex h-[69px] items-baseline text-[37px]">
          <Square />
          <Fit className="ml-[37px] w-[304px]">Young Generation</Fit>
          <Fit className="ml-[16px] w-[498px]">[Eden Space, Survivor Space]</Fit>
        </div>
        <div className="flex h-[72px] items-baseline text-[37px]">
          <Square />
          <Fit className="ml-[37px] w-[260px]">Old Generation</Fit>
        </div>
        <div className="flex h-[75px] items-baseline text-[41px]">
          <Bullet className="mt-[13px] ml-[127px]" />
          <Fit className="ml-[30px] w-[405px]"><span className={wavy}>PermGen</span>/<span className={wavy}>Metaspace</span></Fit>
          <Fit className="ml-[16px] w-[689px] text-[34px]">- Primary storage for the Java class metadata</Fit>
        </div>
        <div className="flex h-[55px] items-baseline text-[41px]">
          <Bullet className="mt-[12px] ml-[127px]" />
          <Fit className="ml-[30px] w-[229px]">Native Heap</Fit>
          <Fit className="ml-[15px] w-[1171px] text-[34px]">- native memory storage for the threads, stack, code cache including objects</Fit>
        </div>
        <Fit className="ml-[480px] w-[773px] text-[34px]">such as MMAP files and third party native libraries</Fit>
      </div>
    </div>
  );
}

function Workspace() {
  return (
    <div className="relative flex h-[1239px] bg-[linear-gradient(to_bottom,#a9bfe7_0%,#9db4df_20%,#92abd5_28%,#8ba2cf_36%,#809ec9_44%,#7892c2_52%,#6a87b9_64%,#5f7dad_74%,#6383ba_82%,#6e90c9_100%)]">
      <SlidePanel />
      <div className="w-[12px] shrink-0 border-x-2 border-r-[#6f93c8] border-l-[#e2eeff] bg-[#aecbf7]" />
      <div className="relative flex grow items-stretch">
        <svg viewBox="0 0 508 190" className="absolute top-0 left-0 h-[190px] w-[508px]"><defs><linearGradient id="sw" x1="1" y1="0" x2="0" y2="1"><stop stopColor="#bdd1f0" /><stop offset="1" stopColor="#a3bae6" /></linearGradient></defs><path d="M0 0H508V46Q390 70 260 112Q120 152 0 186Z" fill="url(#sw)" /></svg>
        <div className="relative ml-[508px]"><Slide /></div>
      </div>
      <div className="relative flex w-[25px] shrink-0 flex-col items-center overflow-hidden border-l-2 border-[#b2ccf7] bg-linear-to-r from-[#8ea5d2] to-[#7694bd]">
        <svg viewBox="0 0 18 9" className="mt-[12px] h-[9px] w-[18px] shrink-0"><path d="M0 9L9 0L18 9Z" fill="#33476d" /></svg>
        <div className="mt-[689px] -mr-2 ml-[2px] flex h-[68px] w-[28px] shrink-0 items-center justify-center border-2 border-[#6d7fa5] bg-linear-to-b from-[#e3e6ee] to-[#dbe7fb]"><svg viewBox="0 0 18 16" className="h-[16px] w-[15px]"><path d="M0 1H18M0 6H18M0 10H18M0 15H18" stroke="#7d8aa3" strokeWidth="2" /></svg></div>
        <svg viewBox="0 0 18 10" className="mt-[331px] h-[10px] w-[18px] shrink-0"><path d="M0 0H18L9 10Z" fill="#2f436e" /></svg>
        <div className="mt-[14px] flex w-full grow flex-col items-center border-t-2 border-white bg-[#a9c3ef] pt-[9px]">
          <svg viewBox="0 0 16 58" className="ml-[4px] h-[56px] w-[16px]"><path d="M0 8L8 0L16 8ZM0 20L8 11L16 20ZM0 36H16L8 45ZM0 48H16L8 57Z" fill="#05070f" /></svg>
        </div>
      </div>
    </div>
  );
}

function StatusBar() {
  return (
    <div className="flex h-[47px] items-stretch border-b-2 border-[#55627e] bg-linear-to-b from-[#dfeafd] via-[#bdd0f3] via-50% to-[#dbe6fa] text-[22px] text-[#3d4a7c]">
      <div className="flex w-[179px] shrink-0 items-center border-r-2 border-[#a3b7da] pb-[3px] pl-[7px]"><Fit className="w-[152px]">Slide 10 of 14</Fit></div>
      <div className="flex w-[206px] shrink-0 items-center border-r-2 border-[#a3b7da] pb-[3px] pl-[21px]"><Fit className="w-[167px]">"Office Theme"</Fit></div>
      <div className="ml-auto flex w-[577px] shrink-0 items-center border-l-2 border-[#6f88b6] bg-linear-to-b from-[#b4cbf4] via-[#9bb3df] to-[#7f98c4] pb-px">
        <div className="ml-[11px] flex h-[39px] w-[125px] overflow-hidden rounded border-2 border-[#8ca3cc] bg-[#c4d5f1]">
          <div className="flex w-[41px] items-center justify-center bg-[#f5c97c]"><svg viewBox="0 0 26 22" className="h-[22px] w-[24px]"><path d="M1 1H25V21H1ZM7 1V21M14 1V14H25M18 5H22" fill="#fff" stroke="#4c4d55" strokeWidth="2.500" /></svg></div>
          <div className="flex w-[41px] items-center justify-center border-r border-[#9db0d2]"><svg viewBox="0 0 24 22" className="h-[22px] w-[24px]"><path d="M1 1H9V8H1ZM15 1H23V8H15ZM1 14H9V21H1ZM15 14H23V21H15Z" fill="#f5f8fe" stroke="#424f6c" strokeWidth="2.500" /></svg></div>
          <div className="flex grow items-center justify-center"><svg viewBox="0 0 24 22" className="h-[22px] w-[24px]"><path d="M0 2H24" stroke="#424f6c" strokeWidth="4" /><path d="M4 4H20V12H4Z" fill="#f5f8fe" stroke="#424f6c" strokeWidth="2" /><path d="M12 12V20M7 20H17" stroke="#424f6c" strokeWidth="2" /></svg></div>
        </div>
        <Fit className="ml-[18px] w-[48px] text-[22px]">80%</Fit>
        <svg viewBox="0 0 36 36" className="ml-[19px] size-[36px]"><circle cx="18" cy="18" r="15.500" fill="#dfe9fa" stroke="#54698f" strokeWidth="2.500" /><path d="M10 18H26" stroke="#3d4f76" strokeWidth="4" /></svg>
        <svg viewBox="0 0 226 32" className="h-[32px] w-[226px]"><path d="M0 17H226" stroke="#53688f" strokeWidth="2" /><path d="M0 19H226" stroke="#c6d6f2" strokeWidth="1.500" /><path d="M116 9V25" stroke="#c6d6f2" strokeWidth="2" /><path d="M81 3H99V20L90 29L81 20Z" fill="#dce7fa" stroke="#54698f" strokeWidth="2.400" /><path d="M90 8V18" stroke="#8ea3c8" strokeWidth="2" /></svg>
        <svg viewBox="0 0 36 36" className="size-[36px]"><circle cx="18" cy="18" r="15.500" fill="#dfe9fa" stroke="#54698f" strokeWidth="2.500" /><path d="M9 18H27M18 9V27" stroke="#3d4f76" strokeWidth="4" /></svg>
        <svg viewBox="0 0 34 34" className="ml-[19px] size-[34px]"><rect x="1" y="1" width="32" height="32" rx="4" fill="#eef2f8" /><path d="M17 4V12M17 22V30M4 17H12M22 17H30M13 8L17 12L21 8M13 26L17 22L21 26M8 13L12 17L8 21M26 13L22 17L26 21" stroke="#2e3a52" strokeWidth="2" fill="none" /><rect x="3" y="3" width="28" height="28" fill="none" stroke="#7c879b" strokeWidth="1.500" strokeDasharray="3 3" /></svg>
      </div>
    </div>
  );
}

/* ---------- Taskbar ---------- */

function Task({ box, btn = true, stack, tint, children }: { box: string; btn?: boolean; stack?: string; tint?: string; children: ReactNode }) {
  const look = tint ?? "bg-linear-to-br from-[#e4eaf4] via-[#bccae0] to-[#b0c0dc]";
  return (
    <>
      <div className={`flex h-full shrink-0 items-center justify-center ${btn ? `rounded-t-[4px] border-2 border-b-0 border-[#46536c] ${look}` : ""} ${box}`}>{children}</div>
      {stack && <div className={`h-full shrink-0 border-r-2 border-[#5d6b85] bg-[#aebbd2] shadow-[inset_-4px_0_0_#c5d0e2] ${stack}`} />}
    </>
  );
}

const W = "h-[70px] w-[70px]";

function Taskbar() {
  return (
    <div className="flex h-[82px] items-stretch overflow-hidden bg-[#aabad5]">
      <div className="flex w-[126px] shrink-0 bg-[#8796b0] pl-[14px]">
        <svg viewBox="0 0 80 80" className="mt-1 h-[78px] w-[80px]"><defs><radialGradient id="orb" cx=".5" cy=".95" r=".9"><stop stopColor="#3fd0f5" /><stop offset=".45" stopColor="#1c659c" /><stop offset=".75" stopColor="#35536f" /><stop offset="1" stopColor="#9fb0c4" /></radialGradient></defs><circle cx="40" cy="40" r="39" fill="url(#orb)" stroke="#3d4f66" strokeWidth="1.500" /><path d="M24 20Q32 13 42 18L38 37Q30 33 20 38Z" fill="#e2603a" /><path d="M45 19Q54 23 65 19L60 39Q50 42 41 38Z" fill="#94bf4e" /><path d="M19 42Q28 37 37 41L32 60Q24 56 14 61Z" fill="#5ba6e0" /><path d="M40 42Q49 46 59 42L54 62Q46 66 36 61Z" fill="#f3c13c" /></svg>
      </div>
      <Task box="w-[108px]" stack="w-[10px]"><svg viewBox="0 0 72 66" className="mt-1 h-[68px] w-[74px]"><path d="M2 8Q2 4 6 4H22L26 8H66Q70 8 70 12V60H2Z" fill="#f3e09a" stroke="#c9ad58" strokeWidth="1.500" /><path d="M4 14H36L40 20H68V60H4Z" fill="#f7e9ae" /><rect x="10" y="3" width="7" height="5" fill="#3fae49" /><rect x="28" y="8" width="7" height="5" fill="#cc4a36" /><rect x="47" y="12" width="8" height="5" fill="#3e9bd8" /><path d="M12 64V46Q12 40 18 40H56Q62 40 62 46V64H52V52H22V64Z" fill="#97d0ee" stroke="#5aa7cf" strokeWidth="1.500" /></svg></Task>
      <Task btn={false} box="w-[149px]"><svg viewBox="0 0 60 60" className="size-[60px]"><path d="M22 3H58V57H22Z" fill="#a8cfe2" stroke="#6fa5bf" strokeWidth="1.500" /><path d="M12 5H50V55H12Z" fill="#b9d9e8" stroke="#6fa5bf" strokeWidth="1.500" /><path d="M2 3H42V57H2Z" fill="#a5c8dc" stroke="#6fa5bf" strokeWidth="1.500" /><circle cx="24" cy="30" r="19" fill="#e0751f" /><path d="M16 18L38 30L16 42Z" fill="#fff" /></svg></Task>
      <Task btn={false} box="w-[120px]"><svg viewBox="0 0 68 70" className="h-[66px] w-[66px]"><path d="M58 46A24 24 0 1 1 59 36H25" fill="none" stroke="#48aee0" strokeWidth="11" /><path d="M4 64Q-4 50 16 26Q40 0 60 4Q70 9 58 22Q60 10 52 11Q34 12 15 38Q2 60 14 62Q8 68 4 64Z" fill="#efbf3c" /></svg></Task>
      <Task btn={false} box="w-[136px]"><svg viewBox="0 0 70 72" className={W}><path d="M34 2H62V28H34Z" fill="#d6d6d6" stroke="#111" strokeWidth="2" /><path d="M39 7H57V22H39Z" fill="#0a10d8" /><path d="M34 30H68V39H34Z" fill="#d6d6d6" stroke="#111" strokeWidth="2" /><path d="M8 34H36V58H8Z" fill="#d6d6d6" stroke="#111" strokeWidth="2" /><path d="M13 39H31V53H13Z" fill="#0a10d8" /><path d="M2 60H44V70H2Z" fill="#d6d6d6" stroke="#111" strokeWidth="2" /><path d="M54 13L30 34L38 35L22 50L46 31L37 30Z" fill="#fbe92b" stroke="#7d741c" strokeWidth="1" /></svg></Task>
      <Task btn={false} box="w-[130px]"><svg viewBox="0 0 62 62" className="size-[63px]"><rect width="62" height="62" rx="8" fill="#a92318" /><path d="M14 46Q32 36 33 16Q33 10 30 12Q27 16 34 29Q42 38 49 36Q51 32 40 32Q24 34 14 46Z" fill="none" stroke="#fff" strokeWidth="3" /></svg></Task>
      <Task box="ml-[5px] w-[107px]" stack="w-[16px]"><svg viewBox="0 0 68 68" className="size-[68px]"><path d="M34 34L4.500 17A34 34 0 0 1 63.500 17H34Z" fill="#cf4338" /><path d="M63.500 17A34 34 0 0 1 34 68L48.700 42.500L49 17Z" fill="#f6c84b" /><path d="M34 68A34 34 0 0 1 4.500 17L19.300 42.500L44 48Z" fill="#3a9a55" /><circle cx="34" cy="34" r="15.500" fill="#fff" /><circle cx="34" cy="34" r="12" fill="#4a84ea" /></svg></Task>
      <Task box="ml-[7px] w-[124px]"><svg viewBox="0 0 66 66" className="size-[66px]"><circle cx="34" cy="33" r="31" fill="#e6622f" /><path d="M1 48V65H16Z" fill="#e6622f" /><path d="M12 42L33 20L39 27L18 48Z" fill="#f3c58e" stroke="#fff" strokeWidth="2" /><path d="M20 54L40 28L45 34L25 58Z" fill="#9a9894" stroke="#fff" strokeWidth="2" /><circle cx="43" cy="18" r="8" fill="#dfe0e2" stroke="#8b8b8b" strokeWidth="2" /><path d="M46 12Q40 18 48 22" fill="none" stroke="#6b6b6b" strokeWidth="2.500" /></svg></Task>
      <Task btn={false} box="w-[137px]"><svg viewBox="0 0 74 72" className={W}><defs><linearGradient id="ed" x1="0" y1="1" x2="1" y2="0"><stop stopColor="#1a72cf" /><stop offset=".5" stopColor="#2bb3c8" /><stop offset="1" stopColor="#66d36a" /></linearGradient></defs><circle cx="37" cy="36" r="35" fill="url(#ed)" /><path d="M2 40Q4 20 24 20Q36 21 39 30Q28 34 32 48Q38 60 60 56Q66 55 68 53Q58 72 36 71Q6 70 2 40Z" fill="#1a5ba8" /><path d="M39 30Q34 36 40 45Q46 50 60 49Q74 44 72 30L74 54L68 53Q50 62 36 54Q26 44 30 35Q33 30 39 30Z" fill="#aabad5" /></svg></Task>
      <Task box="w-[124px]" tint="bg-linear-to-br from-[#f5f7fb] via-[#dfe5f0] to-[#d5deec]"><svg viewBox="0 0 72 68" className="h-[68px] w-[72px]"><path d="M14 2H60V20M14 2L3 14V54H14" fill="#fbe8e1" stroke="#cf5a38" strokeWidth="2.500" /><path d="M12 14L70 18L66 66L8 54Z" fill="#fdf1ec" stroke="#e7b5a3" strokeWidth="1.500" /><path d="M17 21L64 24L61 58L14 49Z" fill="#d4471f" /><path d="M21 28H35M21 36H35M21 44H35" stroke="#fff" strokeWidth="3.500" /><circle cx="47" cy="38" r="11" fill="#fff" /><path d="M47 38L51 28Q58 32 57 38Z" fill="#d4471f" /></svg></Task>
      <Task box="ml-[7px] w-[124px]"><div className="relative"><svg viewBox="0 0 68 72" className="h-[72px] w-[68px]"><path d="M2 3H42L54 14V70H2Z" fill="#fcfdfa" stroke="#3c4437" strokeWidth="2" /><path d="M42 3V14H54" fill="#ddd" stroke="#3c4437" strokeWidth="1.500" /><path d="M4 30H52V68H4Z" fill="#7cbb3a" /><path d="M4 54H52V68H4Z" fill="#4f9c22" /><path d="M62 4L67 8L44 52L38 56L38 47Z" fill="#eab43c" stroke="#82602a" strokeWidth="1.200" /><path d="M60 1L67 3L66 9L60 6Z" fill="#8a3c54" /></svg><span className="absolute top-[24px] left-[11px]"><Fit className="w-[30px] text-[24px] text-[#1c2916]">n++</Fit></span></div></Task>
      <Task box="ml-[7px] w-[107px]" stack="w-[17px]"><svg viewBox="0 0 72 72" className="size-[72px]"><path d="M36 1L52 17L36 33L20 17Z" fill="#ef6a68" /><path d="M18 20L34 36L18 52L1 36Z" fill="#6fa2ee" /><path d="M54 20L71 36L54 52L38 36Z" fill="#9fcf5f" /><path d="M36 38L52 55L36 71L20 55Z" fill="#f7d777" /><path d="M26 14L36 26V56M36 30L50 38" stroke="#e7ecf5" strokeWidth="3.500" fill="none" /><circle cx="36" cy="54" r="5" fill="#e7ecf5" /><circle cx="51" cy="38" r="5" fill="#e7ecf5" /></svg></Task>
      <Task box="ml-[7px] w-[124px]"><svg viewBox="0 0 72 70" className={W}><circle cx="27" cy="28" r="25" fill="none" stroke="#8299ad" strokeWidth="6" strokeDasharray="5.500 5.700" /><circle cx="27" cy="27" r="24" fill="none" stroke="#eaf3f8" strokeWidth="4" strokeDasharray="5.500 5.200" /><circle cx="27" cy="27" r="19" fill="none" stroke="#d7e8f2" strokeWidth="8" /><circle cx="27" cy="27" r="14.500" fill="none" stroke="#7f97ab" strokeWidth="1.500" /><circle cx="57" cy="54" r="9" fill="none" stroke="#f2f8fb" strokeWidth="5" /><circle cx="57" cy="54" r="12.500" fill="none" stroke="#8fa4b6" strokeWidth="3.500" strokeDasharray="4 4" /></svg></Task>
      <Task box="ml-[7px] w-[113px]" stack="w-[12px]" tint="bg-linear-to-b from-[#f6ee86] via-[#eebf62] to-[#e5924e]"><svg viewBox="0 0 68 68" className="size-[68px]"><rect width="68" height="68" rx="22" fill="#4b8af3" /><rect x="13" y="23" width="28" height="23" rx="5" fill="#fff" /><path d="M43 31L55 24V45L43 38Z" fill="#fff" /></svg></Task>
      <Task box="ml-[6px] w-[114px]" stack="w-[11px]"><svg viewBox="0 0 72 68" className="h-[68px] w-[72px]"><path d="M14 2H60V20M14 2L3 14V54H14" fill="#eaf5df" stroke="#5d9a3f" strokeWidth="2.500" /><path d="M10 14L70 20L68 66L6 54Z" fill="#f6faf2" stroke="#a9c896" strokeWidth="1.500" /><path d="M40 24H50V34H40ZM54 25H65V34H54ZM40 37H50V47H40ZM54 37H65V47H54ZM26 50H36V57H26ZM40 51H50V60H40ZM54 51H64V62H54Z" fill="#6ba04c" /><path d="M14 18L36 46M36 20L14 46" stroke="#3d7b22" strokeWidth="8" /></svg></Task>
      <Task box="ml-[7px] w-[124px]"><svg viewBox="0 0 68 68" className="size-[68px]"><defs><linearGradient id="ar" x1="0" y1="0" x2="0" y2="1"><stop stopColor="#b4307e" /><stop offset="1" stopColor="#da2d3c" /></linearGradient></defs><circle cx="34" cy="34" r="34" fill="url(#ar)" /><path d="M14 22H40L55 33H29ZM14 46H40L55 35H29Z" fill="#fff" /></svg></Task>
      <Task box="ml-[7px] w-[113px]" stack="w-[10px]"><svg viewBox="0 0 72 70" className={W}><path d="M4 50Q-2 36 12 22Q30 6 52 14Q72 26 62 50Q52 70 34 66Q26 62 28 52Q26 46 16 54Q8 58 4 50Z" fill="#dfecf6" stroke="#7ba5c8" strokeWidth="2" /><circle cx="14" cy="40" r="7" fill="#de5a48" /><circle cx="24" cy="26" r="7" fill="#68b45a" /><circle cx="40" cy="20" r="7" fill="#edc24a" /><circle cx="32" cy="44" r="6" fill="#6fa3cf" /><path d="M58 14L42 68L38 68L52 12Z" fill="#e58a34" /><path d="M52 14Q50 4 66 0Q72 6 68 12Q64 20 58 18Z" fill="#b98850" /></svg></Task>
      <Task box="ml-[7px] w-[114px]" stack="w-[10px]"><div className="h-[56px] w-[66px] border-2 border-t-[7px] border-[#a9adb5] border-t-[#d0d3d9] bg-black pt-[6px] pl-[6px] text-[17px] leading-none text-white"><Fit className="w-[48px] font-['Liberation_Mono',monospace] font-bold">C:\_</Fit></div></Task>
      <Task box="ml-[7px] w-[125px]"><svg viewBox="0 0 66 66" className="size-[68px]"><path d="M16 4L64 9L60 48L14 40Z" fill="#cbcfd2" stroke="#73777c" strokeWidth="2" /><path d="M20 9L59 13L56 42L18 36Z" fill="#123f1c" /><path d="M22 26H28L30 16L33 32L36 22H42L45 34L48 18L51 28H56" stroke="#3bdd4f" strokeWidth="2.500" fill="none" /><path d="M2 18L10 14V50L2 44Z" fill="#8a8f94" /><path d="M30 46L46 49L50 60Q38 68 28 60Z" fill="#d9dad8" /><path d="M4 48L28 54L24 60L2 52Z" fill="#e9e9e6" stroke="#8f928f" strokeWidth="1" /></svg></Task>
      <Task box="ml-[7px] w-[124px]" tint="bg-linear-to-b from-[#a7b4ca] via-[#93a3bc] to-[#c3cfe0]"><svg viewBox="0 0 70 70" className={W}><rect width="70" height="70" rx="9" fill="#fdfdfd" /><path d="M38 6Q44 12 34 22Q28 28 36 36Q24 30 31 20Q40 12 38 6ZM44 18Q34 24 40 30Q42 34 38 38Q46 32 42 27Q39 24 44 18Z" fill="#e8792c" /><path d="M18 40H50V48Q48 56 34 56Q20 56 18 48Z" fill="#6f8aa5" /><path d="M20 44H48" stroke="#fff" strokeWidth="1.500" /><path d="M50 42Q60 42 54 50L48 52M14 60Q34 66 56 59" stroke="#6f8aa5" strokeWidth="3" fill="none" /></svg></Task>
      <div className="flex w-[385px] shrink-0 items-center bg-[#8694ac] text-white">
        <svg viewBox="0 0 20 12" className="ml-[23px] h-[12px] w-[20px]"><path d="M0 12L10 0L20 12Z" fill="#f4f6fa" /></svg>
        <svg viewBox="0 0 34 36" className="ml-[29px] h-[36px] w-[34px]"><path d="M3 2V36" stroke="#fff" strokeWidth="3" /><path d="M5 4H18L20 8H33L28 19H18L16 16H5Z" fill="#fff" stroke="#5b6880" strokeWidth="1" /></svg>
        <svg viewBox="0 0 34 32" className="ml-[20px] h-[32px] w-[34px]"><path d="M1 11H7L15 3V29L7 21H1Z" fill="#fff" /><path d="M19 10Q23 16 19 22M24 6Q31 16 24 26M28 2Q38 16 28 30" stroke="#fff" strokeWidth="2" fill="none" /></svg>
        <svg viewBox="0 0 34 28" className="ml-[19px] h-[28px] w-[34px]"><path d="M0 23H5V28H0ZM7 19H12V28H7ZM14 13H19V28H14ZM21 7H26V28H21ZM28 0H33V28H28Z" fill="#fff" /></svg>
        <div className="mt-[3px] ml-[46px] flex flex-col items-center gap-[13px] text-[24px]">
          <Fit className="w-[96px]">8:33 PM</Fit>
          <Fit className="w-[100px]">7/8/2021</Fit>
        </div>
      </div>
      <div className="grow border-l-2 border-[#59677f] bg-linear-to-b from-[#a5b1c5] via-[#66748e] to-[#8996ae]" />
    </div>
  );
}

/* ---------- Shared screen ---------- */

function SharedScreen() {
  return (
    <div className="relative mt-[188px] h-[1706px] w-[3036px] shrink-0 border-[6px] border-[#72c438] font-['Open_Sans','Noto_Sans',sans-serif]">
      <div className="h-[1612px] border-[5px] border-b-0 border-[#9fbc57]">
        <TitleBar />
        <TabRow />
        <Ribbon />
        <div className="h-[6px] bg-linear-to-b from-[#c8dcf2] to-[#93afce]" />
        <Workspace />
        <div className="h-[17px] border-t-2 border-b-[3px] border-t-[#d8ecfb] border-b-[#667eae] bg-[#b0cdf6]" />
        <StatusBar />
      </div>
      <Taskbar />
      <div className="absolute top-[42px] left-[1386px] h-[12px] w-[190px] bg-linear-to-b from-[#ecdfae] to-[#e9cf86]" />
      <svg viewBox="0 0 80 80" className="absolute top-[5px] left-[5px] h-[80px] w-[78px]" preserveAspectRatio="none">
        <defs><radialGradient id="ob" cx=".5" cy=".75" r=".7"><stop stopColor="#ffffff" /><stop offset=".6" stopColor="#dfe3ee" /><stop offset="1" stopColor="#b3bdd0" /></radialGradient></defs>
        <circle cx="40" cy="40" r="39" fill="url(#ob)" stroke="#8797b5" strokeWidth="2" />
        <path d="M37 20V14H18V36H28" fill="none" stroke="#cf4a22" strokeWidth="6" />
        <path d="M44 26H61V38H50" fill="none" stroke="#4e8ed0" strokeWidth="5" />
        <path d="M36 46H22V63H38V52" fill="none" stroke="#eba62f" strokeWidth="6" />
        <path d="M44 54V62H64V46H46" fill="none" stroke="#6ea63c" strokeWidth="5" />
        <circle cx="37" cy="37" r="3" fill="#e08038" /><circle cx="45" cy="45" r="3" fill="#82b04a" /><circle cx="45" cy="37" r="3" fill="#5c93cf" /><circle cx="37" cy="45" r="3" fill="#eba62f" />
      </svg>
      <div className="absolute -top-[6px] left-[1106px] flex h-[54px] overflow-hidden rounded-b-lg text-[28px]">
        <div className="flex w-[562px] items-center bg-[#8ac65d] pb-[7px] pl-[21px] text-[#232a20]">
          <Fit className="w-[478px]">You are viewing Saravana's screen</Fit>
          <svg viewBox="0 0 28 26" className="mt-[2px] ml-[12px] h-[26px] w-[28px]"><rect x="11" y="1" width="9" height="14" rx="4.500" fill="#46692f" /><path d="M8 11Q8 19 15 19Q22 19 22 11M15 19V24M9 24.500H21" stroke="#46692f" strokeWidth="2.500" fill="none" /><path d="M1 25L27 1" stroke="#2c4a24" strokeWidth="2" /></svg>
        </div>
        <div className="flex w-[250px] items-center bg-[#222628] pb-[7px] pl-[14px] text-white">
          <Fit className="w-[184px]">View Options</Fit>
          <svg viewBox="0 0 24 13" className="mt-[2px] ml-[10px] h-[13px] w-[24px]"><path d="M2 2L12 11L22 2" fill="none" stroke="#ddd" strokeWidth="3.500" /></svg>
        </div>
      </div>
    </div>
  );
}

export default function App() {
  return (
    <div className="flex h-[2240px] w-[3584px] flex-col overflow-hidden bg-[#111111]">
      <Browser />
      <main className="flex grow items-start">
        <SharedScreen />
        <div className="mt-[1002px] ml-[8px] h-[80px] w-[8px] shrink-0 rounded-full bg-[#cfcfd1]" />
        <div className="mt-[910px] ml-[48px] flex h-[264px] w-[468px] shrink-0 items-center justify-center bg-[#1b1b1b] font-['Open_Sans',sans-serif] text-[30px] font-bold text-white">
          <Fit className="w-[148px]">Saravana</Fit>
        </div>
      </main>
    </div>
  );
}
